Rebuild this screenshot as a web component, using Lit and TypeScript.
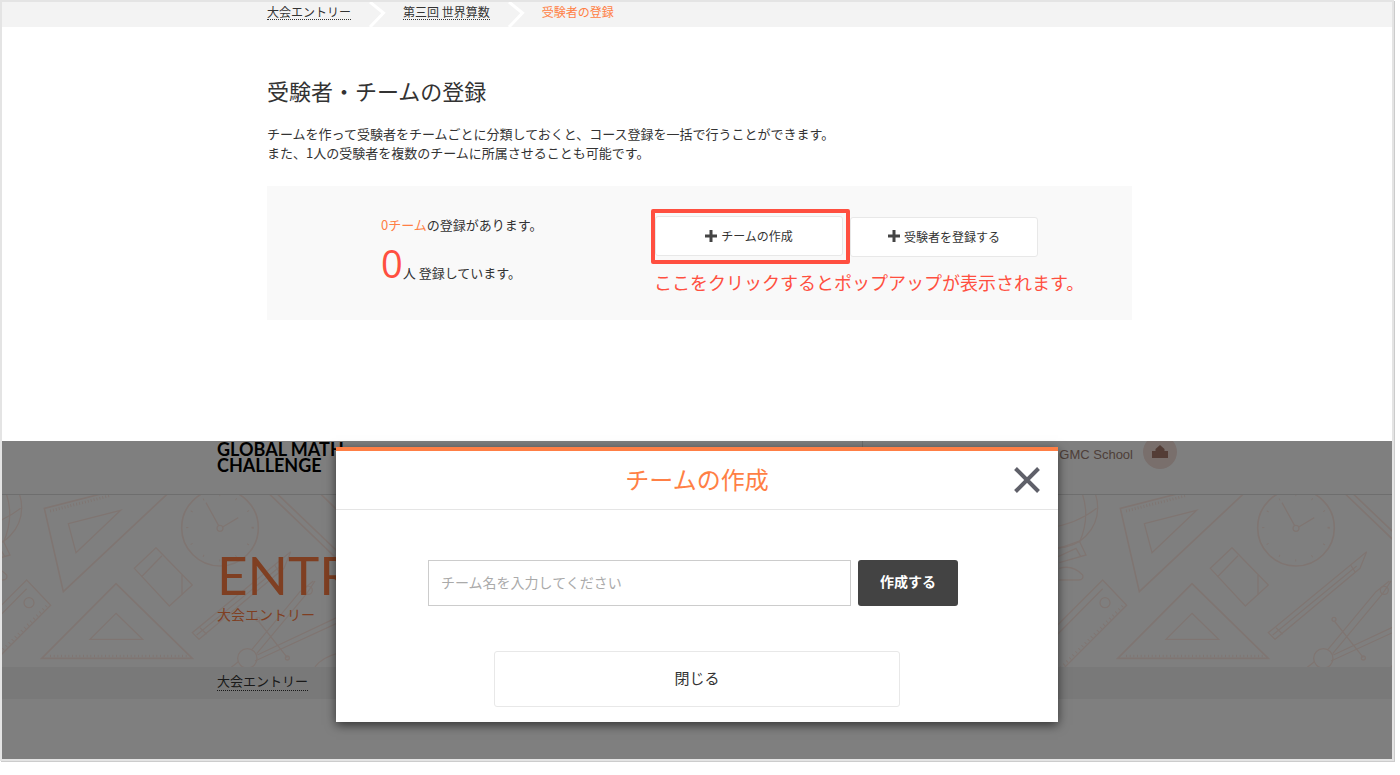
import { LitElement, html, svg, css } from "lit";
import { customElement } from "lit/decorators.js";

const plus = html`<svg class="plus" viewBox="0 0 12 12" aria-hidden="true">
  <path d="M4.5 0h3v4.5H12v3H7.5V12h-3V7.5H0v-3h4.5z" />
</svg>`;

const chevron = html`<svg class="chevron" viewBox="0 0 18 25" aria-hidden="true">
  <path d="M2 0L15.500 11 2 25" />
</svg>`;

const stationery = svg`
  <circle cx="-55" cy="230" r="120" />
  <path d="M-20 120Q60 220 10 335M-80 290Q0 280 62 232M-60 355L10 330 30 372-50 395M-60 380L0 352 14 376M-50 412Q-10 400 20 432 24 446 8 447H-50" />
  <path d="M520 172L190 482 133 232 330 182" stroke-width="5" />
  <path d="M150 240L330 194" stroke-dasharray="3 6" stroke-width="9" />
  <path d="M205 278L362 238 228 365Z" />
  <circle cx="660" cy="290" r="115" stroke-width="5" />
  <circle cx="660" cy="290" r="98" stroke-dasharray="3 48" stroke-width="7" />
  <circle cx="660" cy="292" r="9" />
  <path d="M656 284L618 215M668 288L715 260" />
  <path d="M806 187L1030 402M830 187L1030 378M960 187L1030 255" stroke-width="5" />
  <path d="M468 350L577 462 508 525 403 412ZM424 438L486 374M546 430V492" />
  <path d="M348 458L577 682H125Z" stroke-width="5" />
  <path d="M150 675H560" stroke-dasharray="3 8" stroke-width="8" />
  <path d="M348 547L428 625H270Z" />
  <path d="M-110 637L80 447 152 523-60 735M-90 645L80 473" stroke-width="4" />
  <path d="M140 525L-60 725" stroke-dasharray="3 10" stroke-width="9" />
  <circle cx="87" cy="515" r="15" />
  <path d="M872 362L577 605 597 625 852 412ZM824 402L838 424M590 612L842 405M600 590L620 610" />
  <circle cx="742" cy="682" r="29" />
  <path d="M756 655L900 482 940 450M770 668L920 488 945 450M772 672L1010 560M765 690L1010 577M775 570L862 680M690 712L715 692M945 708Q965 680 1010 668" stroke-width="4" />
  <circle cx="925" cy="478" r="12" />
  <circle cx="774" cy="565" r="6" />
  <circle cx="862" cy="681" r="6" />
`;

@customElement("app-root")
export class AppRoot extends LitElement {
  static styles = css`
    :host {
      display: block;
      font-family: "Noto Sans CJK JP", sans-serif;
      font-size: 13px;
      line-height: 19px;
      color: #333;
    }
    * { box-sizing: border-box; }
    h1, h2, p { margin: 0; font-weight: 400; }
    button, input { font: inherit; color: inherit; margin: 0; }
    svg { display: block; }
    a { color: inherit; text-decoration: none; }
    .link { border-bottom: 1px dotted #333; }

    .frame {
      margin-right: 6px;
      border: 2px solid #e4e4e4;
      box-shadow: 1px 1px 0 #ccc;
      overflow: hidden;
      margin-bottom: 14px;
    }

    .entry { padding-bottom: 121px; }
    .crumbs { background: #f3f3f3; padding-left: 5px; }
    .inner { max-width: 865px; margin: 0 auto; }
    .trail {
      display: flex;
      height: 25px;
      align-items: flex-start;
      font-size: 12px;
      line-height: 16px;
    }
    .trail a { margin-top: 2px; line-height: 15px; }
    .trail span { margin-top: 2px; color: #ff7f45; }
    .chevron { width: 18px; height: 25px; margin: 0 17px; fill: none; stroke: #fff; stroke-width: 3; }
    .content { padding-left: 5px; }
    .heading { padding-top: 47px; font-size: 22px; line-height: 32px; }
    .lead { margin-top: 18px; }

    .panel {
      display: grid;
      grid-template-columns: 270px 1fr;
      margin-top: 24px;
      padding: 23px 36px 23px 114px;
      background: #f9f9f9;
    }
    .counts { padding-top: 6px; }
    .accent { color: #ff7f45; }
    .people { margin-top: 7px; line-height: 44px; }
    .number {
      font-family: "Open Sans", sans-serif;
      font-size: 38px;
      color: #ff4f40;
    }
    .actions { display: flex; align-items: center; }
    .marked { border: 4px solid #ff4f40; border-radius: 2px; padding: 3px 3px 4px 0; }
    .button {
      display: flex;
      align-items: center;
      justify-content: center;
      gap: 4px;
      width: 188px;
      height: 40px;
      padding: 0 0 1px;
      border: 1px solid #e8e8e8;
      border-radius: 3px;
      background: #fff;
      font-size: 12px;
    }
    .plus { width: 12px; height: 12px; fill: #444; }
    .note { margin: 3px 0 0 3px; font-size: 18px; line-height: 30px; color: #ff4f40; }

    .site { position: relative; }
    .wide { max-width: 960px; margin: 0 auto; }
    .header { border-bottom: 1px solid #ddd; }
    .bar { display: flex; height: 53px; align-items: flex-start; }
    .logo {
      flex: 1;
      font-family: Lato, sans-serif;
      font-weight: 700;
      font-size: 18px;
      line-height: 16px;
      color: #000;
    }
    .user {
      display: flex;
      align-items: flex-start;
      padding-left: 196px;
      gap: 10px;
      border-left: 1px solid #ddd;
      font-family: "Liberation Sans", sans-serif;
      color: #9c8073;
    }
    .user span { padding-top: 4px; }
    .avatar { width: 34px; height: 30px; }
    .hero { display: grid; height: 172px; overflow: hidden; }
    .hero > * { grid-area: 1 / 1; }
    .pattern { width: 100%; height: 172px; fill: none; stroke: #ffebe4; stroke-width: 4; }
    .title { width: 100%; padding-top: 51px; color: #ff7f45; }
    .title h2 { font-family: Lato, sans-serif; font-size: 53px; line-height: 58px; }
    .title p { font-size: 14px; line-height: 20px; }
    .location { background: #f3f3f3; height: 32px; }
    .location .wide { padding-top: 4px; }
    .location a { display: inline-block; line-height: 18px; }
    .rest { height: 60px; }

    .overlay {
      position: absolute;
      inset: 0;
      padding-top: 6px;
      background: rgba(0, 0, 0, 0.5);
    }
    .modal {
      max-width: 722px;
      margin: 0 auto;
      padding-bottom: 15px;
      border-top: 4px solid #ff7f45;
      background: #fff;
      box-shadow: 0 3px 10px rgba(0, 0, 0, 0.6);
    }
    .modal-head {
      display: grid;
      grid-template-columns: 26px 1fr 26px;
      align-items: center;
      height: 59px;
      padding: 0 18px;
      border-bottom: 1px solid #e5e5e5;
      text-align: center;
    }
    .modal-head h2 { grid-column: 2; padding-bottom: 2px; font-size: 24px; line-height: 36px; color: #ff7f45; }
    .dismiss { width: 26px; height: 26px; padding: 0; border: 0; background: none; }
    .dismiss svg { width: 26px; height: 26px; stroke: #5f6069; stroke-width: 4; }
    .form { display: flex; gap: 7px; margin: 50px 100px 0 92px; }
    .field {
      flex: 1;
      min-width: 0;
      height: 46px;
      padding: 0 12px 3px;
      border: 1px solid #ccc;
      border-radius: 0;
      background: #fff;
      font-size: 14px;
    }
    .field::placeholder { color: #aaa; opacity: 1; }
    .create {
      width: 100px;
      height: 46px;
      padding: 0 0 3px;
      border: 0;
      border-radius: 3px;
      background: #434343;
      color: #fff;
      font-size: 14px;
      font-weight: 700;
    }
    .close {
      display: block;
      width: 406px;
      max-width: 100%;
      height: 56px;
      margin: 45px auto 0;
      padding: 0 0 3px;
      border: 1px solid #e8e8e8;
      border-radius: 3px;
      background: #fff;
      font-size: 15px;
    }
  `;

  render() {
    return html`
      <main class="frame">
        <section class="entry">
          <nav class="crumbs">
            <div class="inner trail">
              <a class="link" href="#entry">大会エントリー</a>
              ${chevron}
              <a class="link" href="#third">第三回 世界算数</a>
              ${chevron}
              <span>受験者の登録</span>
            </div>
          </nav>
          <div class="content">
            <div class="inner">
              <h1 class="heading">受験者・チームの登録</h1>
              <p class="lead">
                チームを作って受験者をチームごとに分類しておくと、コース登録を一括で行うことができます。<br />また、1人の受験者を複数のチームに所属させることも可能です。
              </p>
              <div class="panel">
                <div class="counts">
                  <p><span class="accent">0チーム</span>の登録があります。</p>
                  <p class="people"><span class="number">0</span>人 登録しています。</p>
                </div>
                <div>
                  <div class="actions">
                    <div class="marked">
                      <button class="button" type="button">${plus}チームの作成</button>
                    </div>
                    <button class="button" type="button">${plus}受験者を登録する</button>
                  </div>
                  <p class="note">ここをクリックするとポップアップが表示されます。</p>
                </div>
              </div>
            </div>
          </div>
        </section>

        <section class="site">
          <header class="header">
            <div class="wide bar">
              <div class="logo">GLOBAL MATH<br />CHALLENGE</div>
              <div class="user">
                <span>GMC School</span>
                <svg class="avatar" viewBox="0 0 34 30" aria-hidden="true">
                  <circle cx="17" cy="11" r="17" fill="#f2ded9" />
                  <path d="M9 10h3.500v-2L17 4l4.500 4v2H25v7H9z" fill="#a87b6c" />
                </svg>
              </div>
            </div>
          </header>
          <div class="hero">
            <svg class="pattern" aria-hidden="true">
              <g transform="translate(-2 -64) scale(0.33333)">${stationery}</g>
              <g transform="translate(1074 -64) scale(0.33333)">${stationery}</g>
            </svg>
            <div class="wide title">
              <h2>ENTRY</h2>
              <p>大会エントリー</p>
            </div>
          </div>
          <nav class="location">
            <div class="wide"><a class="link" href="#entry">大会エントリー</a></div>
          </nav>
          <div class="rest"></div>

          <div class="overlay">
            <div class="modal" role="dialog" aria-labelledby="modal-title">
              <div class="modal-head">
                <h2 id="modal-title">チームの作成</h2>
                <button class="dismiss" type="button" aria-label="閉じる">
                  <svg viewBox="0 0 26 26" aria-hidden="true"><path d="M1.500 1.500l23 23M24.500 1.500l-23 23" /></svg>
                </button>
              </div>
              <form class="form">
                <input class="field" type="text" aria-label="チーム名" placeholder="チーム名を入力してください" />
                <button class="create" type="button">作成する</button>
              </form>
              <button class="close" type="button">閉じる</button>
            </div>
          </div>
        </section>
      </main>
    `;
  }
}
